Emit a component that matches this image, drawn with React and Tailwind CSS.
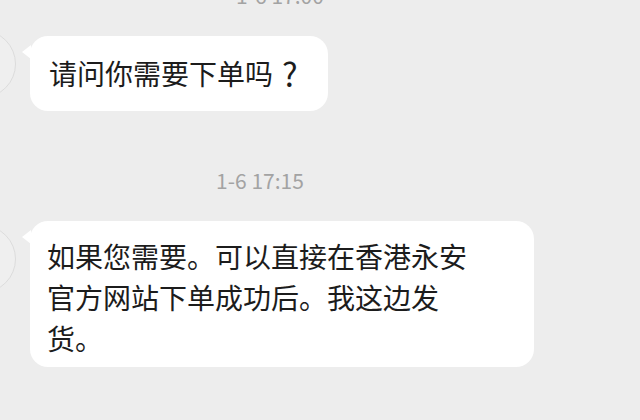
import React from 'react';

const Avatar = ({ className = '' }) => (
  <div className={`shrink-0 w-[68px] h-[68px] -ml-[52px] rounded-full border border-[#dcdcdc] bg-[#efefef] ${className}`} />
);

const Bubble = ({ children, className = '' }) => (
  <div className={`relative bg-white rounded-[18px] text-[28px] text-[#1c1c1c] ${className}`}>
    {/* tail */}
    <span className="absolute -left-[8px] top-[9px] w-0 h-0 border-y-[7px] border-y-transparent border-r-[9px] border-r-white" />
    {children}
  </div>
);

const Time = ({ children, className = '' }) => (
  <div className={`w-[520px] text-center text-[21px] leading-[24px] text-[#a3a3a3] ${className}`}>{children}</div>
);

export default function App() {
  return (
    <div
      className="w-[640px] h-[420px] overflow-hidden bg-[#ededed]"
      style={{ fontFamily: '"Noto Sans CJK SC", "Noto Sans", sans-serif' }}
    >
      <Time className="-mt-[17px] pl-[40px]">1-6 17:00</Time>

      <div className="flex items-start gap-[14px] mt-[23px]">
        <Avatar />
        <Bubble className="mt-[6px] h-[75px] flex items-center pl-[19px] pr-[30px] leading-[41px]">
          <span>请问你需要下单吗</span>
          <span className="ml-[9px] text-[33px] leading-[41px]">?</span>
        </Bubble>
      </div>

      <Time className="mt-[57px]">1-6 17:15</Time>

      <div className="flex items-start gap-[14px] mt-[29px]">
        <Avatar className="mt-[4px]" />
        <Bubble className="w-[504px] pl-[17px] pr-[60px] pt-[15px] pb-[8px] leading-[41px]">
          如果您需要。可以直接在香港永安官方网站下单成功后。我这边发货。
        </Bubble>
      </div>
    </div>
  );
}
